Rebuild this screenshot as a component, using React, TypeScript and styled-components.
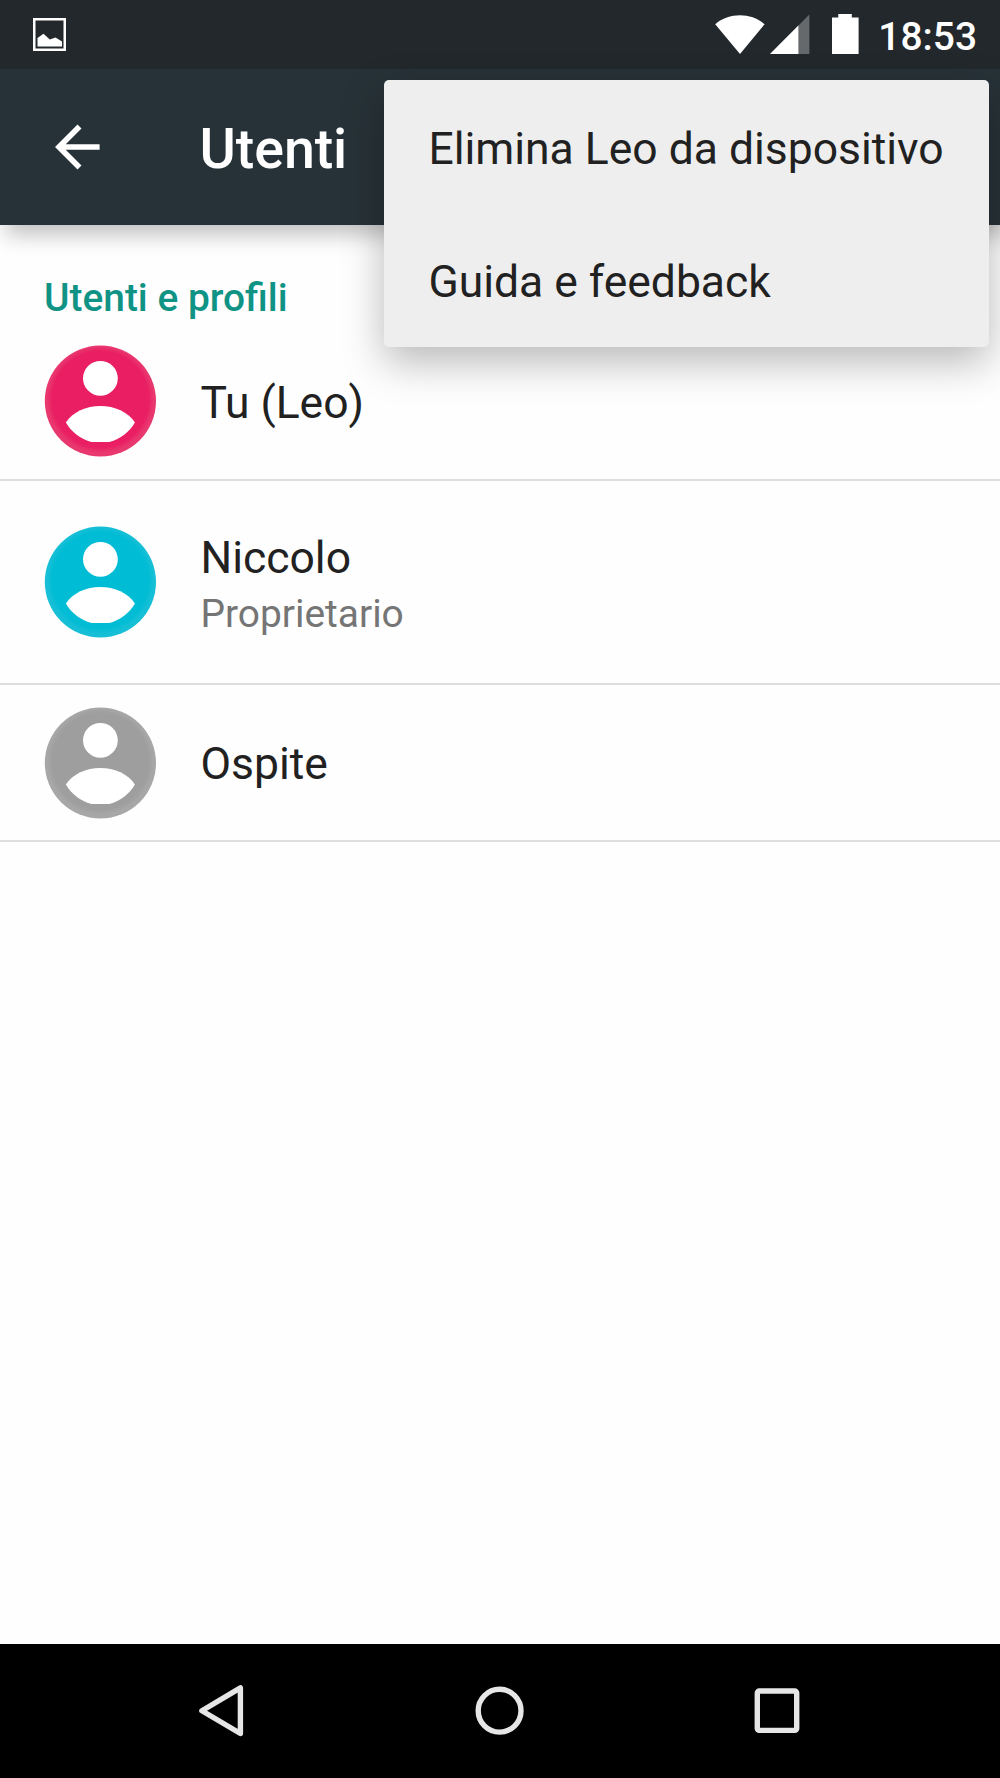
import React from 'react';
import styled, { createGlobalStyle } from 'styled-components';

const GlobalStyle = createGlobalStyle`
  *, *::before, *::after { box-sizing: border-box; }
  body { margin: 0; background: #fefefe; }
  svg { display: block; flex: none; }
  button { appearance: none; background: none; border: 0; padding: 0; margin: 0; font: inherit; color: inherit; }
`;

const Screen = styled.div`
  position: relative;
  display: flex;
  flex-direction: column;
  width: 1000px;
  height: 1778px;
  overflow: hidden;
  background: #fefefe;
  color: #212121;
  font-family: Roboto, 'Liberation Sans', sans-serif;
`;

const StatusBar = styled.header`
  display: flex;
  align-items: flex-start;
  height: 69px;
  padding: 13px 23px 0 33px;
  background: #23282c;
  flex: none;
`;

const Notifications = styled.div`
  flex: 1;
  padding-top: 5px;
`;

const StatusIcons = styled.div`
  display: flex;
  align-items: flex-start;
`;

const IconSlot = styled.span<{ $gap: number }>`
  padding-top: 0.5px;
  margin-right: ${({ $gap }) => $gap}px;
`;

const Clock = styled.time`
  font-size: 38.9px;
  font-weight: 500;
  line-height: 47px;
  color: #fff;
`;

const AppBar = styled.div`
  display: flex;
  align-items: center;
  height: 155.5px;
  padding: 0 55px;
  background: #273238;
  color: #fff;
  flex: none;
  box-shadow: 6px 10px 20px rgba(0, 0, 0, 0.24);
  clip-path: inset(0 0 -40px 0);
`;

const BackButton = styled.button`
  width: 144.6px;
`;

const Title = styled.h1`
  margin: 0;
  padding-top: 5px;
  font-size: 55.56px;
  font-weight: 500;
  line-height: 64px;
  letter-spacing: -0.1px;
`;

const Content = styled.main`
  flex: 1;
  display: flex;
  flex-direction: column;
`;

const SectionTitle = styled.h2`
  margin: 0;
  height: 98.5px;
  padding: 49.5px 44px 0;
  font-size: 38.9px;
  font-weight: 500;
  line-height: 47px;
  color: #0f9385;
`;

const UserRow = styled.div<{ $height: number }>`
  display: flex;
  align-items: center;
  gap: 44.5px;
  height: ${({ $height }) => $height}px;
  padding: 0 44px;
  border-bottom: 2px solid #dedede;
`;

const UserText = styled.div`
  display: flex;
  flex-direction: column;
  padding-top: 3px;
`;

const UserName = styled.span`
  font-size: 44.44px;
  line-height: 60px;
`;

const UserRole = styled.span`
  font-size: 38.9px;
  line-height: 52px;
  color: #757575;
`;

const Menu = styled.div`
  position: absolute;
  top: 80px;
  left: 384px;
  width: 604.5px;
  height: 267px;
  padding-top: 1px;
  border-radius: 5px;
  background: #eeeeee;
  box-shadow: 0 15px 42px rgba(0, 0, 0, 0.28);
`;

const MenuItem = styled.button`
  display: flex;
  align-items: center;
  width: 100%;
  height: 133px;
  padding: 3px 44.4px 0;
  font-size: 44.44px;
  white-space: nowrap;
`;

const NavBar = styled.nav`
  display: flex;
  justify-content: center;
  align-items: center;
  height: 134px;
  padding-right: 1px;
  background: #000;
  flex: none;
`;

const NavButton = styled.button`
  display: flex;
  justify-content: center;
  width: 277.8px;
`;

const PictureIcon = () => (
  <svg width="33" height="33" viewBox="0 0 33 33">
    <rect x="1.25" y="1.25" width="30.5" height="30.5" fill="none" stroke="#fff" strokeWidth="2.5" />
    <path d="M4.5 28.5V20L10.5 15.8L16.8 21.6L22.5 19.6L29 23.5V28.5Z" fill="#fff" />
  </svg>
);

const WifiIcon = () => (
  <svg width="50" height="42" viewBox="0 0 50 42">
    <path d="M.2 10.2C14 -1.6 36 -1.6 49.6 10.2L25 40Z" fill="#fff" />
  </svg>
);

const SignalIcon = () => (
  <svg width="40" height="42" viewBox="0 0 40 42">
    <path d="M0 40L39.4 0.6V40Z" fill="#66696c" />
    <path d="M0 40L28.4 11.6V40Z" fill="#fff" />
  </svg>
);

const BatteryIcon = () => (
  <svg width="27" height="42" viewBox="0 0 27 42">
    <path d="M6.3 0H19.8V3.4H26.6V40H0V3.4H6.3Z" fill="#fff" />
  </svg>
);

const ArrowIcon = () => (
  <svg width="46" height="46" viewBox="0 0 46 46">
    <path d="M24.5 2.6L4 23L24.5 43.4M3.5 23H44.6" fill="none" stroke="#fff" strokeWidth="5.6" />
  </svg>
);

const Avatar = ({ id, color, edge }: { id: string; color: string; edge: string }) => (
  <svg width="112" height="112" viewBox="-0.4 0 112 112">
    <defs>
      <radialGradient id={id} cx="50%" cy="48.5%" r="51.5%">
        <stop offset="0.84" stopColor={color} />
        <stop offset="0.93" stopColor={edge} />
      </radialGradient>
    </defs>
    <circle cx="56" cy="56" r="55.6" fill={`url(#${id})`} />
    <circle cx="56" cy="33.3" r="17.4" fill="#fff" />
    <path
      d="M21.5 77.5C28 67 42 61 56 61S84 67 90.5 77.5C85 87 76 94 65 97H47C36 94 27 87 21.5 77.5Z"
      fill="#fff"
    />
  </svg>
);

const users = [
  { id: 'leo', name: 'Tu (Leo)', color: '#e91e63', edge: '#e9376f', height: 158 },
  { id: 'niccolo', name: 'Niccolo', role: 'Proprietario', color: '#00bcd4', edge: '#16bfd6', height: 204 },
  { id: 'ospite', name: 'Ospite', color: '#9e9e9e', edge: '#a7a7a7', height: 157 },
];

export default function App() {
  return (
    <>
      <GlobalStyle />
      <Screen>
        <StatusBar>
          <Notifications>
            <PictureIcon />
          </Notifications>
          <StatusIcons>
            <IconSlot $gap={4.4}><WifiIcon /></IconSlot>
            <IconSlot $gap={22.6}><SignalIcon /></IconSlot>
            <IconSlot $gap={19}><BatteryIcon /></IconSlot>
            <Clock>18:53</Clock>
          </StatusIcons>
        </StatusBar>
        <AppBar>
          <BackButton aria-label="Indietro">
            <ArrowIcon />
          </BackButton>
          <Title>Utenti</Title>
        </AppBar>
        <Content>
          <SectionTitle>Utenti e profili</SectionTitle>
          {users.map((u) => (
            <UserRow key={u.id} $height={u.height}>
              <Avatar id={u.id} color={u.color} edge={u.edge} />
              <UserText>
                <UserName>{u.name}</UserName>
                {u.role && <UserRole>{u.role}</UserRole>}
              </UserText>
            </UserRow>
          ))}
        </Content>
        <NavBar>
          <NavButton aria-label="Indietro">
            <svg width="46" height="54" viewBox="0.9 0.3 46 54">
              <path d="M42.3 4.2V49.8L3.8 27Z" fill="none" stroke="#e6e6e6" strokeWidth="5.4" strokeLinejoin="round" />
            </svg>
          </NavButton>
          <NavButton aria-label="Home">
            <svg width="50" height="50" viewBox="-0.6 0.3 50 50">
              <circle cx="25" cy="25" r="21.4" fill="none" stroke="#e6e6e6" strokeWidth="5.4" />
            </svg>
          </NavButton>
          <NavButton aria-label="Recenti">
            <svg width="46" height="46" viewBox="0 0.3 46 46">
              <rect x="3.3" y="3.3" width="39.4" height="39.4" rx="2" fill="none" stroke="#e6e6e6" strokeWidth="5.4" />
            </svg>
          </NavButton>
        </NavBar>
        <Menu role="menu">
          <MenuItem role="menuitem">Elimina Leo da dispositivo</MenuItem>
          <MenuItem role="menuitem">Guida e feedback</MenuItem>
        </Menu>
      </Screen>
    </>
  );
}
